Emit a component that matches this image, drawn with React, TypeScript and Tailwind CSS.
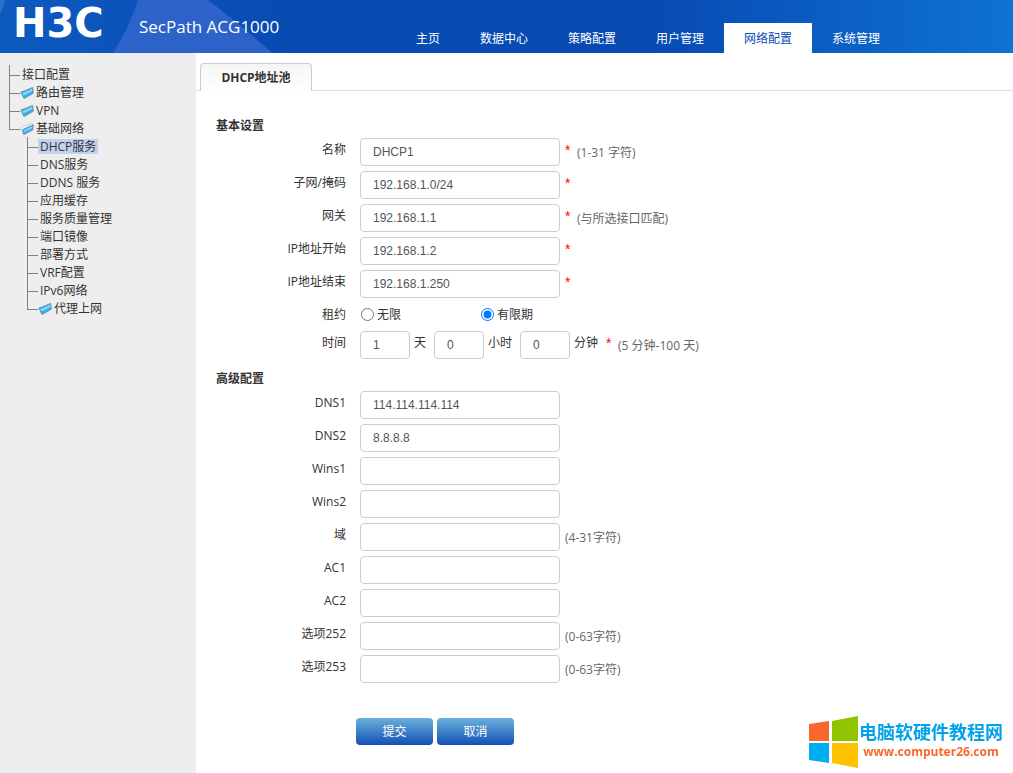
import React, { useState } from 'react';

interface TreeNode {
    label: string;
    folder?: 'open' | 'closed';
    active?: boolean;
    children?: TreeNode[];
}

interface Field {
    id: string;
    label: string;
    value?: string;
    required?: boolean;
    hint?: string;
}

const navItems = ['主页', '数据中心', '策略配置', '用户管理', '网络配置', '系统管理'];

const tree: TreeNode[] = [
    { label: '接口配置' },
    { label: '路由管理', folder: 'closed' },
    { label: 'VPN', folder: 'closed' },
    {
        label: '基础网络',
        folder: 'open',
        children: [
            { label: 'DHCP服务', active: true },
            { label: 'DNS服务' },
            { label: 'DDNS 服务' },
            { label: '应用缓存' },
            { label: '服务质量管理' },
            { label: '端口镜像' },
            { label: '部署方式' },
            { label: 'VRF配置' },
            { label: 'IPv6网络' },
            { label: '代理上网', folder: 'closed' },
        ],
    },
];

const basicFields: Field[] = [
    { id: 'name', label: '名称', value: 'DHCP1', required: true, hint: '(1-31 字符)' },
    { id: 'subnet', label: '子网/掩码', value: '192.168.1.0/24', required: true },
    { id: 'gateway', label: '网关', value: '192.168.1.1', required: true, hint: '(与所选接口匹配)' },
    { id: 'ip-start', label: 'IP地址开始', value: '192.168.1.2', required: true },
    { id: 'ip-end', label: 'IP地址结束', value: '192.168.1.250', required: true },
];

const advancedFields: Field[] = [
    { id: 'dns1', label: 'DNS1', value: '114.114.114.114' },
    { id: 'dns2', label: 'DNS2', value: '8.8.8.8' },
    { id: 'wins1', label: 'Wins1' },
    { id: 'wins2', label: 'Wins2' },
    { id: 'domain', label: '域', hint: '(4-31字符)' },
    { id: 'ac1', label: 'AC1' },
    { id: 'ac2', label: 'AC2' },
    { id: 'option252', label: '选项252', hint: '(0-63字符)' },
    { id: 'option253', label: '选项253', hint: '(0-63字符)' },
];

const leaseUnits = [
    { id: 'days', unit: '天', value: '1' },
    { id: 'hours', unit: '小时', value: '0' },
    { id: 'minutes', unit: '分钟', value: '0' },
];

const inputClass =
    "h-7 rounded border border-[#ccc] bg-white px-3 font-['Liberation_Sans',sans-serif] text-xs text-[#555] outline-none focus:border-[#66afe9]";
const labelClass = 'w-[150px] shrink-0 text-right leading-6';

const FolderIcon: React.FC<{ open: boolean }> = ({ open }) => (
    <svg width="14" height="16" viewBox="0 0 14 16" className="shrink-0" aria-hidden="true">
        {open && <path d="M0.8 8.5 L3.5 5.5 L5.5 5.8 L12 3.4 L13 5 L3.5 14 Z" fill="#f8fcfe" stroke="#9fb6c2" strokeWidth="0.7" />}
        <path
            d={open ? 'M2.6 9.6 L13.2 4.8 L12.8 10 L3.8 14.6 Z' : 'M0.8 8 L4 7 L12.6 3.4 L13.3 9.2 L4 14.6 Z'}
            fill="#38aee8"
            stroke="#5e8ca5"
            strokeWidth="0.8"
        />
        <path d={open ? 'M3.6 10.4 L12.4 6.3 L12.3 8 L4.2 12 Z' : 'M2.2 9.2 L12 4.8 L12.4 7 L3.6 11.6 Z'} fill="#86d8fa" />
    </svg>
);

const Tree: React.FC<{ nodes: TreeNode[] }> = ({ nodes }) => (
    <ul>
        {nodes.map((node, i) => (
            <li key={node.label}>
                <div className="flex h-[18px] items-center">
                    <span className="flex h-full w-[11px] shrink-0 flex-col">
                        <span className="h-[11px] border-b border-l border-[#808080]" />
                        {i < nodes.length - 1 && <span className="h-[7px] border-l border-[#808080]" />}
                    </span>
                    {node.folder && <FolderIcon open={node.folder === 'open'} />}
                    <a href="#" className={node.active ? 'bg-[#c1d2ee] px-0.5 leading-[15px]' : 'px-0.5 leading-[15px]'}>
                        {node.label}
                    </a>
                </div>
                {node.children && (
                    <div className="pl-[18px]">
                        <Tree nodes={node.children} />
                    </div>
                )}
            </li>
        ))}
    </ul>
);

const Required = () => (
    <span className="w-3 font-['Liberation_Sans',sans-serif] text-sm leading-6 text-[#f00]">*</span>
);

const FieldRow: React.FC<{ field: Field }> = ({ field }) => (
    <div className="flex h-7 items-start">
        <label htmlFor={field.id} className={labelClass}>
            {field.label}
        </label>
        <input id={field.id} type="text" defaultValue={field.value} className={`${inputClass} ml-[14px] mr-[5px] w-[200px]`} />
        {field.required && <Required />}
        {field.hint && <span className="leading-[30px] text-[#666]">{field.hint}</span>}
    </div>
);

const SectionTitle: React.FC<{ children: React.ReactNode }> = ({ children }) => (
    <h2 className="pt-2 pl-5 font-bold leading-[14px]">{children}</h2>
);

const Header = () => (
    <header className="relative flex h-[53px] items-end bg-[linear-gradient(to_right,#0d5abf,#084bb3_28%,#084bb3_65%,#0e73d3)] text-white">
        <svg className="absolute top-0 left-0" width="280" height="53" viewBox="0 0 280 53" aria-hidden="true">
            <path d="M0 0 H5 Q4 7 0 14 Z" fill="#2c70c9" />
            <path d="M138 0 H208 Q240 24 272 53 H113 Q128 30 138 0 Z" fill="#2d63c8" />
        </svg>
        <div className="relative flex h-full items-center">
            <span className="w-[125px] pb-2 pl-[13px] font-['DejaVu_Sans',sans-serif] text-[40px] font-bold leading-none">H3C</span>
            <span className="pl-[14px] text-[17px] leading-6">SecPath ACG1000</span>
        </div>
        <nav className="relative mr-[113px] ml-auto flex">
            {navItems.map((item) => (
                <a
                    key={item}
                    href="#"
                    className={
                        item === '网络配置' ? 'h-[30px] bg-white px-5 leading-8 text-[#084bb3]' : 'h-[30px] px-5 leading-8'
                    }
                >
                    {item}
                </a>
            ))}
        </nav>
    </header>
);

const Watermark = () => (
    <div className="fixed right-[10px] bottom-[5px] flex items-center">
        <svg width="50" height="52" viewBox="0 0 50 52" aria-hidden="true">
            <path d="M0 8 L20 5 V25 H0 Z" fill="#f8682c" />
            <path d="M23 5 L49 0 V25 H23 Z" fill="#8fc400" />
            <path d="M0 27 H20 V47 L0 44 Z" fill="#00aef0" />
            <path d="M23 27 H49 V52 L23 47 Z" fill="#ffc200" />
        </svg>
        <div className="text-center">
            <div className="text-lg font-bold leading-5 text-[#00a2e9]">电脑软硬件教程网</div>
            <div className="text-xs font-bold leading-5 text-[#f8682c]">www.computer26.com</div>
        </div>
    </div>
);

export default function App() {
    const [lease, setLease] = useState('limited');

    return (
        <div className="flex min-h-screen flex-col bg-white font-['Open_Sans','Noto_Sans_CJK_SC',sans-serif] text-xs text-[#333]">
            <Header />
            <div className="flex flex-1">
                <aside className="w-[196px] shrink-0 bg-[#eceef0]">
                    <div className="bg-[#eee] pt-3 pb-[3px] pl-[9px]">
                        <Tree nodes={tree} />
                    </div>
                </aside>
                <main className="min-w-0 flex-1">
                    <div className="flex border-b border-[#ddd] pt-[10px] pl-1">
                        <button
                            type="button"
                            className="-mb-px h-7 w-28 rounded-t border border-b-0 border-[#ccc] bg-linear-to-b from-[#f5f5f5] to-white font-bold"
                        >
                            DHCP地址池
                        </button>
                    </div>
                    <form className="pt-5" onSubmit={(e) => e.preventDefault()}>
                        <div className="flex flex-col gap-[5px]">
                            <SectionTitle>基本设置</SectionTitle>
                            {basicFields.map((field) => (
                                <FieldRow key={field.id} field={field} />
                            ))}
                            <div className="flex h-[23px] items-center">
                                <span className={labelClass}>租约</span>
                                <label className="ml-[15px] flex w-[120px] items-center gap-[3px]">
                                    <input
                                        type="radio"
                                        name="lease"
                                        checked={lease === 'unlimited'}
                                        onChange={() => setLease('unlimited')}
                                    />
                                    无限
                                </label>
                                <label className="flex items-center gap-[3px]">
                                    <input
                                        type="radio"
                                        name="lease"
                                        checked={lease === 'limited'}
                                        onChange={() => setLease('limited')}
                                    />
                                    有限期
                                </label>
                            </div>
                            <div className="flex h-7 items-start">
                                <span className={`${labelClass} mr-[14px]`}>时间</span>
                                {leaseUnits.map(({ id, unit, value }) => (
                                    <React.Fragment key={id}>
                                        <input id={id} type="text" defaultValue={value} className={`${inputClass} mr-1 w-[50px]`} />
                                        <label htmlFor={id} className="mr-2 leading-6">
                                            {unit}
                                        </label>
                                    </React.Fragment>
                                ))}
                                <Required />
                                <span className="leading-[30px] text-[#666]">(5 分钟-100 天)</span>
                            </div>
                            <SectionTitle>高级配置</SectionTitle>
                            {advancedFields.map((field) => (
                                <FieldRow key={field.id} field={field} />
                            ))}
                        </div>
                        <div className="mt-[35px] flex gap-1 pl-40 text-white">
                            <button type="submit" className="h-[27px] w-[77px] rounded bg-linear-to-b from-[#6cb0da] to-[#1450b4]">
                                提交
                            </button>
                            <button type="button" className="h-[27px] w-[77px] rounded bg-linear-to-b from-[#6cb0da] to-[#1450b4]">
                                取消
                            </button>
                        </div>
                    </form>
                </main>
            </div>
            <Watermark />
        </div>
    );
}
